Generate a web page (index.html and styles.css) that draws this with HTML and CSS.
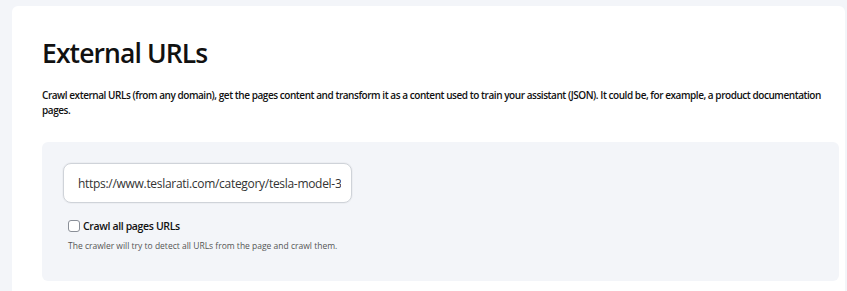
FILE: index.html
```html
<!DOCTYPE html>
<html lang="en">
<head>
<meta charset="utf-8">
<title>External URLs</title>
<link rel="stylesheet" href="styles.css">
</head>
<body>
<main class="card">
  <h1 class="title">External URLs</h1>
  <p class="desc">Crawl external URLs (from any domain), get the pages content and transform it as a content used to train your assistant (JSON). It could be, for example, a product documentation pages.</p>
  <section class="panel">
    <input class="url-input" type="text" value="https://www.teslarati.com/category/tesla-model-3">
    <label class="check-row">
      <span class="checkbox"></span>
      <span class="check-label">Crawl all pages URLs</span>
    </label>
    <p class="help">The crawler will try to detect all URLs from the page and crawl them.</p>
  </section>
</main>
</body>
</html>
```
FILE: styles.css
```css
html, body {
  margin: 0;
  padding: 0;
}
body {
  background: #f3f5f9;
  font-family: "Open Sans", "Noto Sans", sans-serif;
  color: #111;
  height: 291px;
  overflow: hidden;
}
.card {
  margin: 6px 2px 0 12px;
  background: #ffffff;
  border-radius: 6px 6px 0 0;
  padding: 30px 6px 0 30px;
  height: 285px;
  box-sizing: border-box;
}
.title {
  margin: 0;
  font-size: 26.5px;
  font-weight: 600;
  line-height: 34px;
  color: #111;
  letter-spacing: -0.9px;
}
.desc {
  margin: 18px 0 0 0;
  font-size: 10px;
  font-weight: 600;
  line-height: 15px;
  letter-spacing: -0.45px;
  max-width: 795px;
  color: #111;
}
.panel {
  margin-top: 24px;
  background: #f3f5f9;
  border-radius: 6px;
  padding: 21px 21px 0 21px;
  height: 139px;
  box-sizing: border-box;
}
.url-input {
  display: block;
  box-sizing: border-box;
  width: 289px;
  height: 40px;
  border: 1px solid #cfd3d9;
  box-shadow: 0 0 0 1px #eceef2;
  border-radius: 8px;
  background: #fff;
  padding: 0 10px 0 14px;
  font-family: "Open Sans", "Noto Sans", sans-serif;
  font-size: 12px;
  letter-spacing: -0.3px;
  color: #333;
  outline: none;
}
.check-row {
  display: flex;
  align-items: center;
  gap: 3px;
  margin-top: 16px;
  margin-left: 5px;
}
.checkbox {
  box-sizing: border-box;
  width: 12px;
  height: 12px;
  border: 1px solid #8a8f98;
  border-radius: 3px;
  background: #fff;
}
.check-label {
  font-size: 10.5px;
  font-weight: 600;
  letter-spacing: -0.35px;
  color: #111;
}
.help {
  margin: 7px 0 0 5px;
  font-size: 8.5px;
  color: #555;
}
```
